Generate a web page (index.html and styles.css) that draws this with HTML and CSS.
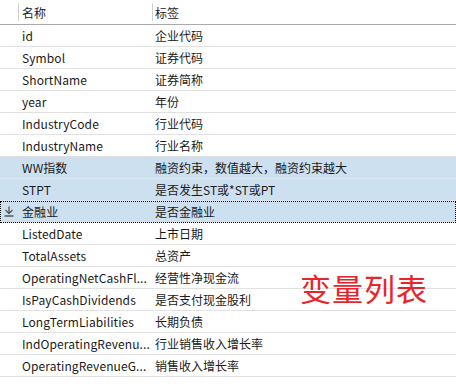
FILE: index.html
```html
<!DOCTYPE html>
<html>
<head>
<meta charset="utf-8">
<link rel="stylesheet" href="styles.css">
</head>
<body>
<div class="grid">
  <div class="row head">
    <div class="ind"></div>
    <div class="c1"><span>名称</span></div>
    <div class="c2"><span>标签</span></div>
  </div>
  <div class="row"><div class="ind"></div><div class="c1">id</div><div class="c2">企业代码</div></div>
  <div class="row"><div class="ind"></div><div class="c1">Symbol</div><div class="c2">证券代码</div></div>
  <div class="row"><div class="ind"></div><div class="c1">ShortName</div><div class="c2">证券简称</div></div>
  <div class="row"><div class="ind"></div><div class="c1">year</div><div class="c2">年份</div></div>
  <div class="row"><div class="ind"></div><div class="c1">IndustryCode</div><div class="c2">行业代码</div></div>
  <div class="row"><div class="ind"></div><div class="c1">IndustryName</div><div class="c2">行业名称</div></div>
  <div class="row sel"><div class="ind"></div><div class="c1">WW指数</div><div class="c2">融资约束，数值越大，融资约束越大</div></div>
  <div class="row sel"><div class="ind"></div><div class="c1">STPT</div><div class="c2">是否发生ST或*ST或PT</div></div>
  <div class="row sel focus"><div class="ind"><svg width="10" height="11" viewBox="0 0 10 11"><path d="M5 0.5V7.5M1.5 4L5 7.5L8.5 4M0.5 10H9.5" fill="none" stroke="#555" stroke-width="1.3"/></svg></div><div class="c1">金融业</div><div class="c2">是否金融业</div></div>
  <div class="row"><div class="ind"></div><div class="c1">ListedDate</div><div class="c2">上市日期</div></div>
  <div class="row"><div class="ind"></div><div class="c1">TotalAssets</div><div class="c2">总资产</div></div>
  <div class="row"><div class="ind"></div><div class="c1">OperatingNetCashFl...</div><div class="c2">经营性净现金流</div></div>
  <div class="row"><div class="ind"></div><div class="c1">IsPayCashDividends</div><div class="c2">是否支付现金股利</div></div>
  <div class="row"><div class="ind"></div><div class="c1">LongTermLiabilities</div><div class="c2">长期负债</div></div>
  <div class="row"><div class="ind"></div><div class="c1">IndOperatingRevenu...</div><div class="c2">行业销售收入增长率</div></div>
  <div class="row"><div class="ind"></div><div class="c1">OperatingRevenueG...</div><div class="c2">销售收入增长率</div></div>
  <div class="stamp">变量列表</div>
</div>
</body>
</html>
```
FILE: styles.css
```css
html, body {
  margin: 0;
  padding: 0;
  background: #ffffff;
}
body {
  width: 456px;
  height: 388px;
  overflow: hidden;
  font-family: "Noto Sans CJK SC", "Noto Sans", sans-serif;
  font-size: 12px;
  color: #1a1a1a;
}
.grid {
  position: relative;
  display: flex;
  flex-direction: column;
}
.row {
  display: grid;
  grid-template-columns: 18px 134px 1fr;
  height: 21px;
  border-bottom: 1px solid #e1e1e1;
  align-items: center;
  box-sizing: content-box;
}
.row.head {
  height: 24px;
  border-bottom: 1px solid #a9a9a9;
}
.head .c1, .head .c2 {
  height: 18px;
  border-left: 1px solid #d0d0d0;
  padding-left: 3px;
  display: flex;
  align-items: center;
  color: #222;
}
.head .c2 { padding-left: 2px; }
.c1 {
  padding-left: 4px;
  white-space: nowrap;
  overflow: hidden;
  padding-right: 1px;
  letter-spacing: 0.1px;
}
.c2 {
  padding-left: 3px;
  white-space: nowrap;
  overflow: hidden;
}
.ind {
  display: flex;
  align-items: center;
  justify-content: center;
  height: 100%;
}
.row.sel {
  background: #cde0f0;
  border-bottom-color: #dbe7f2;
}
.row.focus {
  background: #cde0f0;
  outline: 1px dotted #000;
  outline-offset: -1px;
  border-bottom-color: #e1e1e1;
}
.row.focus .c1, .row.focus .c2 { line-height: 19px; }
.stamp {
  position: absolute;
  left: 300px;
  top: 268px;
  font-size: 31px;
  color: #e8252b;
  letter-spacing: 1px;
  line-height: 40px;
}
```
